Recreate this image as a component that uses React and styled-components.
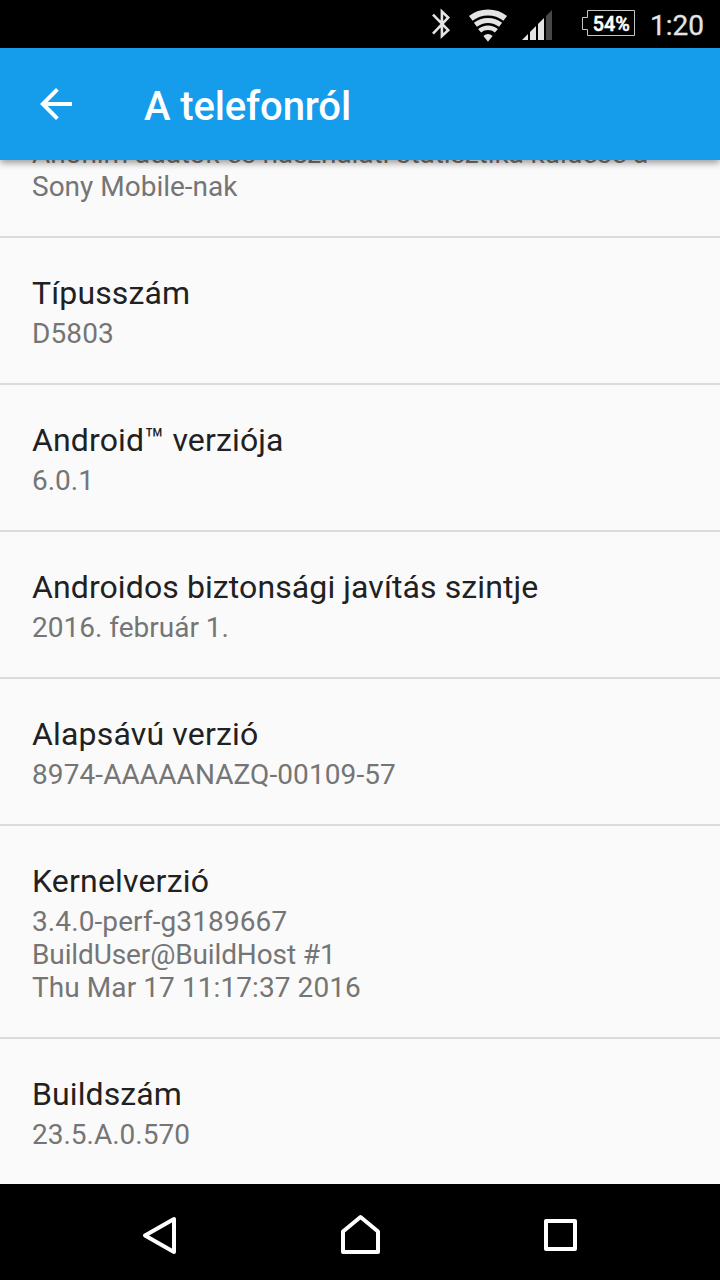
import React from 'react';
import styled, { createGlobalStyle } from 'styled-components';

const ITEMS = [
    {
        summary: [
            { text: 'Anonim adatok és használati statisztika küldése a', tracking: -0.09 },
            { text: 'Sony Mobile-nak' },
        ],
    },
    { title: 'Típusszám', summary: [{ text: 'D5803', tracking: 0.1 }] },
    { title: 'Android™ verziója', summary: [{ text: '6.0.1' }] },
    { title: 'Androidos biztonsági javítás szintje', tracking: 0.1, summary: [{ text: '2016. február 1.' }] },
    { title: 'Alapsávú verzió', tracking: 0.17, summary: [{ text: '8974-AAAAANAZQ-00109-57', tracking: 0.09 }] },
    {
        title: 'Kernelverzió',
        tracking: 0.18,
        summary: [
            { text: '3.4.0-perf-g3189667', tracking: 0.1 },
            { text: 'BuildUser@BuildHost #1', tracking: -0.12 },
            { text: 'Thu Mar 17 11:17:37 2016', tracking: 0.08 },
        ],
    },
    { title: 'Buildszám', tracking: 0.1, summary: [{ text: '23.5.A.0.570' }] },
];

const BluetoothIcon = () => (
    <svg width="20" height="32" viewBox="432 8 20 32" fill="none" stroke="#e4e4e4" strokeWidth="2.6">
        <path d="M433 14.6 448.2 30.2 441.9 36V11.6L448.2 17.6 433 33.6" />
    </svg>
);

const WifiIcon = () => (
    <svg width="40" height="34" viewBox="468 8 40 34" fill="none" stroke="#e4e4e4">
        <path d="M470.8 18.3a28.4 28.4 0 0 1 34.4 0" strokeWidth="6" />
        <path d="M475.4 24.8a20.5 20.5 0 0 1 25.2 0" strokeWidth="5" />
        <path d="M479.6 30.7a13.2 13.2 0 0 1 16.8 0" strokeWidth="4.6" />
        <path d="M483.4 36a7.2 7.2 0 0 1 9.2 0L488 41.8Z" fill="#e4e4e4" stroke="none" />
    </svg>
);

const SignalIcon = () => (
    <svg width="31" height="32" viewBox="522 9 31 32" fill="#e4e4e4">
        <path d="M522 40 528 34V40Z" />
        <path d="M530 32 536 26V40H530Z" />
        <path d="M538 24 544 18V40H538Z" />
        <path d="M546 16 552 10V40H546Z" fill="#484848" />
    </svg>
);

const BatteryIcon = () => (
    <svg width="54" height="28" viewBox="582 9 54 28" fill="none" stroke="#c4c4c4">
        <path d="M587.5 10.5H634.5V35.5H587.5V29.5H582.5V17.5H587.5Z" />
        <text
            x="592.8"
            y="30.6"
            fill="#fff"
            stroke="#fff"
            strokeWidth="0.5"
            fontSize="20.5"
            fontWeight="500"
            textLength="37"
            lengthAdjust="spacingAndGlyphs"
        >
            54%
        </text>
    </svg>
);

const BackArrow = () => (
    <svg width="32" height="32" viewBox="0 0 32 32" fill="none" stroke="#fff" strokeWidth="4">
        <path d="M17.4 1.4 2.8 16 17.4 30.6M2.8 16H32" />
    </svg>
);

const App = () => (
    <Screen>
        <GlobalStyle />
        <StatusBar>
            <BluetoothIcon />
            <WifiIcon />
            <SignalIcon />
            <BatteryIcon />
            <Clock>1:20</Clock>
        </StatusBar>
        <AppBar>
            <BackArrow />
            <PageTitle>A telefonról</PageTitle>
        </AppBar>
        <List>
            {ITEMS.map(({ title, tracking, summary }) => (
                <Item key={summary[0].text}>
                    {title ? <ItemTitle $tracking={tracking}>{title}</ItemTitle> : null}
                    {summary.map((line) => (
                        <Summary key={line.text} $tracking={line.tracking}>{line.text}</Summary>
                    ))}
                </Item>
            ))}
        </List>
        <NavBar>
            <NavButton aria-label="Vissza">
                <svg width="40" height="44" viewBox="140 1213 40 44">
                    <path d="M145 1235.5 174 1219V1252Z" />
                </svg>
            </NavButton>
            <NavButton aria-label="Kezdőképernyő">
                <svg width="44" height="44" viewBox="338 1213 44 44">
                    <path d="M343 1252V1231.5L360.5 1217 378 1231.5V1252Z" />
                </svg>
            </NavButton>
            <NavButton aria-label="Áttekintés">
                <svg width="40" height="44" viewBox="540 1213 40 44">
                    <path d="M546 1221H575V1249H546Z" />
                </svg>
            </NavButton>
        </NavBar>
    </Screen>
);

const GlobalStyle = createGlobalStyle`
    body {
        margin: 0;
        background: #000;
        font-family: Roboto, sans-serif;
    }
`;

const Screen = styled.div`
    display: flex;
    flex-direction: column;
    width: 720px;
    height: 1280px;
    overflow: hidden;
    background: #fafafa;
`;

const StatusBar = styled.div`
    display: flex;
    flex: none;
    justify-content: flex-end;
    height: 48px;
    padding-right: 16px;
    box-sizing: border-box;
    background: #000;

    svg {
        flex: none;
        margin: 8px 16px 0 0;
    }

    svg:nth-of-type(2) {
        margin-right: 14px;
    }

    svg:nth-of-type(3) {
        margin: 9px 29px 0 0;
    }

    svg:nth-of-type(4) {
        margin: 9px 14px 0 0;
    }
`;

const Clock = styled.span`
    color: #e4e4e4;
    font-size: 28px;
    line-height: 52px;
    height: 48px;
    -webkit-text-stroke: 0.3px #e4e4e4;
`;

const AppBar = styled.header`
    position: relative;
    z-index: 1;
    display: flex;
    flex: none;
    align-items: center;
    height: 112px;
    padding: 0 40px;
    box-sizing: border-box;
    background: #159dec;
    box-shadow: 0 3px 7px rgba(0, 0, 0, 0.38);
`;

const PageTitle = styled.h1`
    margin: 6px 0 0 72px;
    color: #fff;
    font-size: 40px;
    font-weight: 500;
    line-height: 48px;
    letter-spacing: -0.12px;
`;

/* scrolled to the end, so the rows stack up from the bottom */
const List = styled.main`
    display: flex;
    flex: 1;
    flex-direction: column;
    justify-content: flex-end;
    min-height: 0;
    overflow: hidden;
`;

const Item = styled.section`
    flex: none;
    padding: 36px 32px 33px;
    border-bottom: 2px solid #dbdbdb;

    &:last-child {
        border-bottom: none;
    }
`;

const ItemTitle = styled.h2`
    margin: 0 0 5px;
    color: #212121;
    font-size: 32px;
    font-weight: 400;
    line-height: 38px;
    letter-spacing: ${({ $tracking = 0.14 }) => $tracking}px;
`;

const Summary = styled.div`
    color: #757575;
    font-size: 28px;
    line-height: 33px;
    letter-spacing: ${({ $tracking = 0 }) => $tracking}px;
    white-space: nowrap;
`;

const NavBar = styled.nav`
    display: flex;
    flex: none;
    justify-content: center;
    gap: 158px;
    height: 96px;
    padding-top: 29px;
    box-sizing: border-box;
    background: #000;
`;

const NavButton = styled.button`
    height: 44px;
    padding: 0;
    border: none;
    background: none;

    svg {
        display: block;
        fill: none;
        stroke: #fff;
        stroke-width: 4;
        stroke-linejoin: round;
    }
`;

export default App;
